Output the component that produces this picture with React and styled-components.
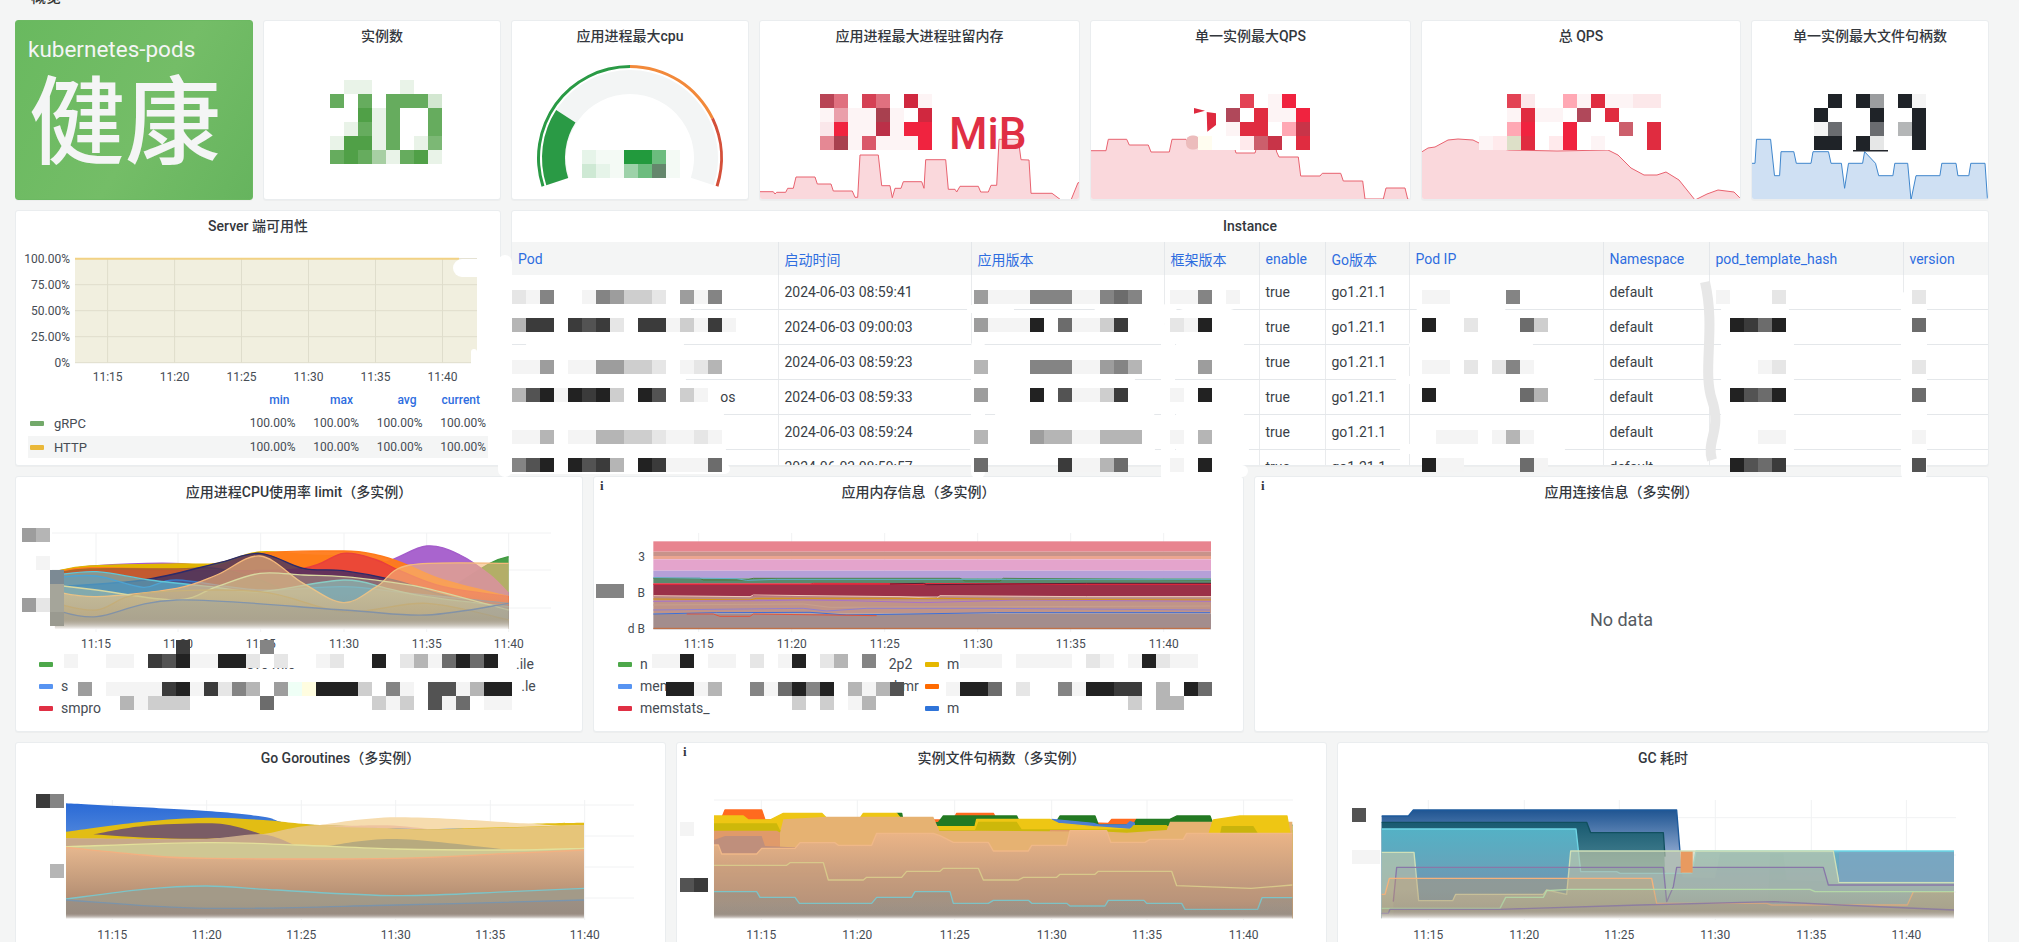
import React from 'react';
import styled, { createGlobalStyle } from 'styled-components';

const GlobalStyle = createGlobalStyle`
  html, body { margin: 0; padding: 0; height: 100%; overflow: hidden; background: #f4f5f5; }
  body { font-family: Roboto, "Noto Sans CJK SC", sans-serif; color: #3a3f47; }
`;

/* ---------- page + panels ---------- */

const Page = styled.div`
  position: relative;
  width: 2019px;
  height: 942px;
  overflow: hidden;
  box-sizing: border-box;
  padding: 0 30px 0 15px;
  background: #f4f5f5;
`;

const SectionTitle = styled.div`
  height: 20px;
  padding-left: 16px;
  font-size: 15px;
  font-weight: 500;
  line-height: 0;
  margin-top: -3px;
  margin-bottom: 3px;
  color: #333;
`;

const Row = styled.div`
  display: grid;
  grid-template-columns: ${p => p.$cols};
  height: ${p => p.$h}px;
  column-gap: 10px;
  margin-bottom: 10px;
`;

const Panel = styled.section`
  position: relative;
  display: flex;
  flex-direction: column;
  min-width: 0;
  box-sizing: border-box;
  background: #fff;
  border: 1px solid #eaedef;
  border-radius: 3px;
  box-shadow: 0 1px 1px rgba(0, 0, 0, 0.03);
  overflow: hidden;
`;

const PanelTitle = styled.h2`
  flex: none;
  margin: 0;
  height: 31px;
  font-size: 14px;
  line-height: 31px;
  font-weight: 500;
  text-align: center;
  color: #33373d;
`;

const InfoMark = styled.span`
  position: absolute;
  left: 6px;
  top: 1px;
  font: bold 13px "Liberation Serif", serif;
  color: #33373d;
`;

const StatusPanel = styled(Panel)`
  padding: 15px 0 0 12px;
  border-color: #6cb962;
  background: linear-gradient(120deg, #69b95f 0%, #74bd67 55%, #66b45e 100%);
  color: #f4f5f5;
`;

const StatusName = styled.div`
  font-size: 22.5px;
  line-height: 26px;
`;

const StatusValue = styled.div`
  font-size: 96px;
  font-weight: 500;
  line-height: 100px;
  margin-top: 11px;
  margin-left: 1px;
  white-space: nowrap;
`;

const StatBody = styled.div`
  flex: 1;
  display: flex;
  align-items: flex-end;
  min-height: 0;
`;

const StatUnit = styled.span`
  position: absolute;
  left: 189px;
  top: 87px;
  font-size: 44px;
  line-height: 52px;
  font-weight: 500;
  color: #e02f44;
`;

const NoData = styled.div`
  flex: 1;
  display: flex;
  align-items: center;
  justify-content: center;
  font-size: 18px;
  color: #555a61;
`;

/* ---------- chart parts ---------- */

const ChartSvg = styled.svg`
  display: block;
  flex: none;
`;

const AxisLabel = styled.text`
  font-family: Roboto, sans-serif;
  font-size: 12px;
  fill: #464c54;
  text-anchor: ${p => p.$anchor || 'middle'};
`;

const Legend = styled.div`
  display: grid;
  grid-template-columns: ${p => p.$cols || '1fr'};
  grid-auto-rows: 22px;
  padding-left: ${p => p.$left}px;
  font-size: 14px;
  color: #464c54;
`;

const LegendItem = styled.div`
  display: flex;
  align-items: center;
  white-space: nowrap;
  min-width: 0;
`;

const Marker = styled.i`
  flex: none;
  width: 14px;
  height: 5px;
  border-radius: 1px;
  margin-right: ${p => p.$gap || 8}px;
  background: ${p => p.$color};
`;

const LegendBit = styled.span`
  margin-left: ${p => p.$ml || 0}px;
`;

const ValueLegend = styled.div`
  flex: 1;
  display: grid;
  grid-template-columns: 1fr repeat(4, 63.5px);
  grid-template-rows: 20px 26px 22px;
  padding: 0 12px;
  font-size: 12px;
  color: #464c54;
`;

const ValueHead = styled.div`
  grid-column: ${p => p.$col};
  display: flex;
  align-items: center;
  justify-content: flex-end;
  padding-right: 8px;
  font-weight: 500;
  color: #2e6de0;
`;

const ValueRow = styled.div`
  grid-column: 1 / -1;
  display: grid;
  grid-template-columns: subgrid;
  align-items: center;
  background: ${p => (p.$shade ? '#f4f5f5' : 'transparent')};
`;

const ValueName = styled.div`
  display: flex;
  align-items: center;
  padding-left: 2px;
  font-size: 13px;
`;

const ValueCell = styled.div`
  text-align: right;
  padding-right: 2px;
`;

/* ---------- table ---------- */

const Table = styled.table`
  width: 1476px;
  table-layout: fixed;
  border-collapse: collapse;
  font-size: 14px;
  color: #3a3f47;
`;

const Th = styled.th`
  height: 33px;
  padding: 0 6px;
  text-align: left;
  font-weight: 400;
  color: #2e6de0;
  background: #f4f5f5;
  border-right: 1px solid #e4e7ea;
  white-space: nowrap;
  &:last-child { border-right: 0; }
`;

const Td = styled.td`
  height: 34px;
  padding: 0 ${p => p.$right || 6}px 0 6px;
  border-right: 1px solid #e9ebed;
  border-bottom: 1px solid #e4e7ea;
  white-space: nowrap;
  text-align: ${p => p.$align || 'left'};
  &:last-child { border-right: 0; }
`;

/* ---------- redaction overlay ---------- */

const PaintLayer = styled.svg`
  position: absolute;
  left: 0;
  top: 0;
  pointer-events: none;
`;

const MosaicGrid = styled.div`
  position: absolute;
  left: ${p => p.$x}px;
  top: ${p => 9.5 + 14 * p.$j}px;
  display: grid;
  grid-template-columns: repeat(${p => p.$cols}, 14px);
  grid-auto-rows: 14px;
  pointer-events: none;
`;

function hex(c) {
  return [1, 3, 5].map(i => parseInt(c.slice(i, i + 2), 16));
}

function tileColor(ch, base, tones) {
  if (ch === '.') return 'transparent';
  if (tones && tones[ch]) return tones[ch];
  const t = ch === ',' ? 0.05 : Number(ch) / 9;
  const [r, g, b] = hex(base);
  return `rgb(${[r, g, b].map(v => Math.round(255 + (v - 255) * t)).join(',')})`;
}

function Mosaic({ x, j, rows, base = '#222222', tones }) {
  return (
    <MosaicGrid $x={x} $j={j} $cols={rows[0].length}>
      {rows.join('').split('').map((ch, i) => (
        <div key={i} style={{ background: tileColor(ch, base, tones) }} />
      ))}
    </MosaicGrid>
  );
}

const RED = '#e02c40';
const RED_TONES = {
  a: '#b0485a', b: '#f0233f', c: '#c83448', p: '#ffa8b4', q: '#ffeaec', r: '#cc5f6c', t: '#dde0c8', y: '#fffdf0',
};

const MOSAICS = [
  { x: 330, j: 5, base: '#3a9430', rows: ['01100100', '70707772', '00817007', '01717007', '18817016', '78741781'] },
  { x: 582, j: 10, base: '#229a3d', tones: { g: '#64876c' }, rows: ['1,,996,', '21,46g,'] },
  { x: 820, j: 6, base: '#d0283f', tones: { a: '#a8404f', b: '#f0233f', c: '#bb3048', d: '#b84455' }, rows: ['d608609,', ',4,,a,09', '1b,,c,bb', '5a,7,,,b'] },
  { x: 1198, j: 6, base: RED, tones: RED_TONES, rows: ['...80,b0', '..a09,,b', '..,990pc', 'y00qrc09'] },
  { x: 1479, j: 6, base: RED, tones: RED_TONES, rows: ['..8100p,9,,11', '..,9,,0a09000', '..pb00b000r09', ',qt90qb0,0009'] },
  { x: 1814, j: 6, base: '#1f2328', rows: ['.9.94.9,', '9...9..9', ',6..6.39', '99091009'] },

  // table: pod
  { x: 512, j: 20, rows: ['1,5..,54221.4,5.'] },
  { x: 512, j: 22, rows: ['388.8781.88,2,8,'] },
  { x: 512, j: 25, rows: [',,4.,,44221.,13.'] },
  { x: 512, j: 27, rows: ['379,9892.97.2,..'] },
  { x: 512, j: 30, rows: [',,3.,,33221,,1,.'] },
  { x: 512, j: 32, rows: ['579.9783.98,,,6.'] },
  // table: app version
  { x: 974, j: 20, rows: ['4,,,555,,565.'] },
  { x: 974, j: 22, rows: ['4,,,9.6,,28..'] },
  { x: 974, j: 25, rows: ['3...555,,453.'] },
  { x: 974, j: 27, rows: ['4...9.7,,28..'] },
  { x: 974, j: 30, rows: ['3...433,,333.'] },
  { x: 974, j: 32, rows: ['6.....8,,36..'] },
  // table: framework
  { x: 1170, j: 20, rows: [',,5.,'] },
  { x: 1170, j: 22, rows: ['1,9..'] },
  { x: 1170, j: 25, rows: ['..4..'] },
  { x: 1170, j: 27, rows: [',.9..'] },
  { x: 1170, j: 30, rows: [',.3..'] },
  { x: 1170, j: 32, rows: [',.9..'] },
  // table: pod ip
  { x: 1422, j: 20, rows: [',,....5..'] },
  { x: 1422, j: 22, rows: ['9..1...62'] },
  { x: 1422, j: 25, rows: [',,.1.15,.'] },
  { x: 1422, j: 27, rows: ['9......63'] },
  { x: 1422, j: 30, rows: ['.,,,.,3,.'] },
  { x: 1422, j: 32, rows: ['9,,....6,'] },
  // table: hash
  { x: 1716, j: 20, rows: [',...1'] },
  { x: 1716, j: 22, rows: ['.9869'] },
  { x: 1716, j: 25, rows: ['...,1'] },
  { x: 1716, j: 27, rows: ['.9769'] },
  { x: 1716, j: 30, rows: ['...,,'] },
  { x: 1716, j: 32, rows: ['.9768'] },
  // table: version
  { x: 1912, j: 20, rows: ['1'] },
  { x: 1912, j: 22, rows: ['6'] },
  { x: 1912, j: 25, rows: ['1'] },
  { x: 1912, j: 27, rows: ['6'] },
  { x: 1912, j: 30, rows: [','] },
  { x: 1912, j: 32, rows: ['7'] },

  // cpu panel
  { x: 22, j: 37, rows: ['43'] },
  { x: 36, j: 39, rows: [','] },
  { x: 50, j: 40, tones: { a: '#7c8a94', b: '#a5a59a', c: '#9a9a90' }, rows: ['a', 'b', 'b', 'c'] },
  { x: 22, j: 42, rows: ['41'] },
  { x: 176, j: 45, rows: ['8'] },
  { x: 260, j: 45, rows: ['5'] },
  { x: 64, j: 46, rows: [',..,,.879,,9910100,1..9.13,6969.'] },
  { x: 64, j: 48, tones: { a: '#effff6', b: '#fffde0' }, rows: ['.4.,,,,89,8153.4ab9992.5,.77,399', '....3,222.....6.......2,2.7,6.,,'] },

  // memory panel
  { x: 596, j: 41, rows: ['55'] },
  { x: 652, j: 46, rows: [',,9.,,.1.,9.13.5'] },
  { x: 960, j: 46, rows: [',,,.,,,,.1,.,91,,'] },
  { x: 666, j: 48, rows: ['99,3..5,6959.3,37'] },
  { x: 946, j: 48, rows: [',996.1..5,9988.3.96'] },
  { x: 792, j: 49, rows: ['2.2.,3'] },
  { x: 1128, j: 49, rows: ['2.33'] },

  // bottom row axes
  { x: 36, j: 56, rows: ['85'] },
  { x: 50, j: 61, rows: ['3'] },
  { x: 680, j: 58, rows: [','] },
  { x: 680, j: 62, rows: ['78'] },
  { x: 1352, j: 57, rows: ['7'] },
  { x: 1352, j: 60, rows: [',,'] },
];

/* white brush marks that sit under the mosaics */
const BRUSH = [
  ['M505 262V470', 14],
  ['M462 268H484', 18],
  ['M474 352V368', 6],
  ['M511 309H685', 12],
  ['M532 344H678', 12],
  ['M511 379H680', 12],
  ['M511 414H718', 12],
  ['M511 449H720', 12],
  ['M511 469H725', 10],
  ['M978 346V472', 14],
  ['M971 309H1010', 8],
  ['M1100 305L1170 312', 14],
  ['M1170 320L1240 300', 14],
  ['M1168 330V476', 14],
  ['M980 379H1130', 10],
  ['M1000 414L1150 412', 10],
  ['M975 449H1150', 10],
  ['M1180 344H1240', 8],
  ['M1180 414H1240', 8],
  ['M1180 449H1245', 8],
  ['M1175 471H1242', 12],
  ['M1422 305H1500', 14],
  ['M1400 380H1590', 8],
  ['M1405 449H1560', 10],
  ['M1412 345H1530', 6],
  ['M1725 309H1785', 8],
  ['M1725 344H1790', 8],
  ['M1725 379H1790', 8],
  ['M1725 414H1790', 8],
  ['M1725 449H1790', 8],
  ['M1914 300V472', 26],
  ['M20 515V620', 4],
];

function Paint() {
  return (
    <PaintLayer width="2019" height="942" viewBox="0 0 2019 942">
      {BRUSH.map(([d, w]) => (
        <path key={d} d={d} stroke="#fff" strokeWidth={w} strokeLinecap="round" fill="none" />
      ))}
      <path d="M1705 282C1716 330 1702 370 1712 400S1706 440 1712 460" stroke="#e7e7e7" strokeWidth="10" fill="none" />
      <rect x="1186" y="135.5" width="14" height="14" rx="6" fill="#ecbcbc" />
      <polygon points="1194,108 1205,110.7 1194,113.7" fill="#de2a3f" />
      <polygon points="1206.7,112 1216,113.3 1216,125 1207.3,131.7" fill="#de2a3f" />
      <rect x="1853" y="149.5" width="35" height="2" fill="#23262c" />
    </PaintLayer>
  );
}

/* ---------- path helpers ---------- */

function smoothLine(pts) {
  let d = `M${pts[0][0]} ${pts[0][1]}`;
  for (let i = 0; i < pts.length - 1; i++) {
    const p0 = pts[i - 1] || pts[i];
    const p1 = pts[i];
    const p2 = pts[i + 1];
    const p3 = pts[i + 2] || p2;
    const c1 = [p1[0] + (p2[0] - p0[0]) / 6, p1[1] + (p2[1] - p0[1]) / 6];
    const c2 = [p2[0] - (p3[0] - p1[0]) / 6, p2[1] - (p3[1] - p1[1]) / 6];
    d += `C${c1[0]} ${c1[1]} ${c2[0]} ${c2[1]} ${p2[0]} ${p2[1]}`;
  }
  return d;
}

function straightLine(pts) {
  return 'M' + pts.map(p => p.join(' ')).join('L');
}

function Series({ pts, color, fill, alpha = 1, bottom, width = 4, curve, linePts }) {
  const trace = curve ? smoothLine : straightLine;
  const line = trace(pts);
  const first = pts[0][0];
  const last = pts[pts.length - 1][0];
  return (
    <>
      <path d={`${line}L${last} ${bottom}L${first} ${bottom}Z`} fill={fill || color} fillOpacity={alpha} />
      {color && <path d={linePts ? trace(linePts) : line} fill="none" stroke={color} strokeWidth={width} strokeLinejoin="round" />}
    </>
  );
}

function XTicks({ ticks, y }) {
  const labels = ['11:15', '11:20', '11:25', '11:30', '11:35', '11:40'];
  return ticks.map((x, i) => (
    <AxisLabel key={x} x={x} y={y}>{labels[i]}</AxisLabel>
  ));
}

function Grid({ xs, ys, x0, x1, y0, y1 }) {
  return (
    <g stroke="#f1f2f3" strokeWidth="1">
      {xs.map(x => <line key={x} x1={x} x2={x} y1={y0} y2={y1} />)}
      {ys.map(y => <line key={y} x1={x0} x2={x1} y1={y} y2={y} />)}
    </g>
  );
}

function Fade({ id, x, y, w, h }) {
  return (
    <>
      <defs>
        <linearGradient id={id} x1="0" y1="0" x2="0" y2="1">
          <stop offset="0" stopColor="#8f8078" stopOpacity="0" />
          <stop offset="0.7" stopColor="#8f8078" stopOpacity="0.22" />
          <stop offset="1" stopColor="#fff" stopOpacity="1" />
        </linearGradient>
      </defs>
      <rect x={x} y={y} width={w} height={h} fill={`url(#${id})`} />
    </>
  );
}

function Spark({ x, w, top, pts, stroke, fill }) {
  return (
    <ChartSvg width={w} height={200 - top} viewBox={`${x + 1} ${top - 1} ${w} ${200 - top}`}>
      <path d={`${straightLine(pts)}L${pts[pts.length - 1][0]} 200L${pts[0][0]} 200Z`} fill={fill} />
      <path d={straightLine(pts)} fill="none" stroke={stroke} strokeWidth="1" />
    </ChartSvg>
  );
}

/* ---------- row 1 data ---------- */

const MEM_SPARK = [
  [759, 191.7], [773.3, 191.7], [775, 194], [776.7, 192.3], [785.7, 192.3], [787.7, 188.3], [793.3, 188.3], [796, 177],
  [815, 177], [817.3, 184], [831, 184], [833.3, 191], [852.3, 191], [855, 197.3], [857.7, 197.3], [860, 155], [878.3, 155],
  [881.7, 185.7], [890, 185.7], [892.3, 197.7], [895, 188.3], [901, 188.3], [903.3, 181.7], [921.7, 181.7], [924, 188.3],
  [925.7, 159.7], [945.7, 159.7], [948.3, 189.3], [955, 189.3], [956.7, 192], [960, 186.3], [978.3, 186.3], [980.7, 192],
  [988.3, 192], [991, 185.3], [996.7, 185.3], [999, 139.3], [1018.3, 139.3], [1021, 159.7], [1029, 160], [1031, 193.3],
  [1052, 193.3], [1061, 200], [1071, 200], [1078, 182.7], [1080, 182.7],
];

const QPS_SPARK = [
  [1090, 150.7], [1106, 150.7], [1108.3, 139.3], [1126.7, 139.3], [1129.3, 145], [1148.3, 145], [1151, 152], [1169.3, 152],
  [1172, 139.3], [1186, 139.3], [1190, 145], [1209, 145], [1213, 139.3], [1232, 139.3], [1236, 153], [1255, 153], [1259, 139.3],
  [1274, 139.3], [1276.7, 152], [1279, 157], [1298.3, 157], [1300.7, 176], [1320, 176], [1322.3, 173.3], [1340.7, 173.3],
  [1343.3, 181], [1362.7, 181], [1365, 199], [1383.3, 199], [1386, 188], [1405, 188], [1407.7, 199], [1411, 200],
];

const TOTAL_SPARK = [
  [1420, 153], [1428, 148], [1435, 147], [1448, 140], [1458, 139], [1473, 140], [1483, 145], [1495, 148], [1509, 150], [1557, 151],
  [1608, 150], [1618, 155], [1631, 168], [1644, 175], [1657, 175], [1666, 172], [1679, 180], [1695, 200], [1707, 194], [1718, 190],
  [1734, 192], [1741, 199],
];

const FD_SPARK = [
  [1750.7, 163.3], [1755, 163.3], [1756.5, 139.3], [1770.6, 139.3], [1774.5, 175.7], [1779.6, 175.7], [1781, 151.7], [1793.8, 151.7],
  [1796.3, 163.3], [1811, 163.3], [1813, 151.7], [1828.5, 151.7], [1831, 163.3], [1841.4, 163.3], [1844.6, 188.3], [1848.5, 163.3],
  [1862.6, 163.3], [1864.6, 151.7], [1875.5, 163.3], [1878.7, 175.7], [1892.9, 175.7], [1894.8, 163.3], [1907.7, 163.3], [1911, 200],
  [1916, 175.7], [1939.9, 175.7], [1941.8, 163.3], [1956, 163.3], [1957.9, 175.7], [1968.8, 175.7], [1970.8, 163.3], [1985, 163.3], [1987.5, 200],
];

function polar(r, a) {
  const t = (a * Math.PI) / 180;
  return [630 - r * Math.cos(t), 158 - r * Math.sin(t)];
}

function band(r0, r1, a0, a1) {
  const large = a1 - a0 > 180 ? 1 : 0;
  const [ax, ay] = polar(r1, a0);
  const [bx, by] = polar(r1, a1);
  const [cx, cy] = polar(r0, a1);
  const [dx, dy] = polar(r0, a0);
  return `M${ax} ${ay}A${r1} ${r1} 0 ${large} 1 ${bx} ${by}L${cx} ${cy}A${r0} ${r0} 0 ${large} 0 ${dx} ${dy}Z`;
}

function Gauge() {
  return (
    <ChartSvg width="236" height="148" viewBox="512 51 236 148">
      <path d={band(64, 88, -18, 198)} fill="#f3f5f5" />
      <path d={band(65, 88, -18, 33)} fill="#2a9a45" />
      <path d={band(90, 93, -18, 90)} fill="#2a9a45" />
      <path d={band(90, 93, 90, 154.4)} fill="#f2893a" />
      <path d={band(90, 93, 154.4, 198)} fill="#d4503a" />
    </ChartSvg>
  );
}

/* ---------- row 3 + 4 series, in 3x reference units ---------- */

const CPU_SERIES = [
  { color: '#3f9a3f', alpha: 0.95, pts: [[1150, 385], [1300, 280], [1440, 190], [1496, 170]] },
  { color: '#a45ccb', alpha: 0.95, pts: [[135, 215], [250, 198], [490, 190], [620, 205], [750, 230], [1000, 210], [1130, 185], [1250, 138], [1350, 165], [1440, 225], [1496, 280]] },
  { color: '#e0b400', alpha: 1, pts: [[135, 215], [240, 198], [500, 192], [620, 190], [750, 156], [900, 165], [1100, 178], [1250, 240], [1496, 290]] },
  { color: '#ff7a1a', alpha: 0.95, pts: [[135, 217], [240, 203], [500, 207], [620, 198], [750, 160], [1000, 153], [1100, 165], [1180, 190], [1300, 240], [1496, 290]] },
  { color: '#e83e3d', alpha: 0.85, pts: [[135, 218], [300, 208], [600, 212], [880, 205], [1000, 160], [1100, 180], [1170, 212], [1300, 260], [1496, 290]] },
  { color: '#a8682c', alpha: 0.6, pts: [[135, 220], [240, 207], [500, 207], [620, 205], [750, 240], [880, 300]] },
  { color: '#2b2a6b', alpha: 0.7, pts: [[135, 260], [400, 240], [620, 190], [750, 160], [880, 205], [1000, 212], [1150, 240], [1300, 285], [1496, 330]] },
  { color: '#3a78c8', alpha: 0.45, pts: [[135, 232], [260, 228], [400, 262], [500, 240], [750, 270], [1000, 260], [1200, 280], [1496, 310]] },
  { color: '#5fc7d8', alpha: 0.55, pts: [[135, 225], [260, 215], [420, 240], [620, 262], [750, 275], [1000, 240], [1130, 265], [1250, 290], [1496, 320]] },
  { color: '#f5b87a', alpha: 0.62, pts: [[135, 275], [260, 290], [500, 265], [620, 225], [750, 168], [880, 250], [1000, 308], [1100, 260], [1200, 195], [1496, 190]] },
  { color: '#d8d8a0', alpha: 0.35, pts: [[135, 255], [260, 270], [500, 300], [620, 260], [750, 220], [880, 225], [1000, 230], [1130, 245], [1250, 265], [1496, 330]] },
  { color: '#c9b27a', alpha: 0.35, pts: [[135, 310], [260, 330], [400, 280], [750, 275], [1000, 335], [1250, 310], [1496, 360]] },
  { color: '#8096b0', alpha: 0.25, pts: [[135, 330], [260, 350], [500, 300], [1000, 330], [1250, 345], [1496, 310]] },
];

const MEM_BANDS = [
  [124, 31, '#e8848f'], [155, 13, '#c8938a'], [168, 10, '#eba590'], [178, 34, '#e4a4cc'], [212, 23, '#b5a0d8'],
  [235, 15, '#5a8a6e'], [250, 5, '#d8283c'], [255, 35, '#9a3048'], [290, 10, '#b88a80'], [300, 40, '#c09488'], [340, 48, '#a38d8d'],
];

const MEM_LINES = [
  ['#4a7a3c', [[190, 235], [330, 235], [340, 240], [470, 240], [490, 235], [1110, 235], [1125, 243], [1230, 243], [1240, 235], [1863, 240]]],
  ['#62b2c8', [[190, 233], [440, 236], [470, 241], [560, 238], [1110, 238], [1125, 238], [1220, 238], [1863, 238]]],
  ['#e0283c', [[190, 253], [660, 253], [670, 250], [1863, 252]]],
  ['#5a1c34', [[900, 252], [1000, 250], [1010, 254], [1490, 250], [1863, 250]]],
  ['#efc9b8', [[190, 287], [480, 290], [490, 285], [930, 290], [1040, 295], [1050, 287], [1490, 290], [1863, 290]]],
  ['#d9940f', [[190, 297], [480, 300], [500, 295], [1060, 295], [1280, 298], [1863, 300]]],
  ['#a872c8', [[190, 304], [520, 302], [640, 300], [780, 302], [1000, 308], [1280, 300], [1863, 304]]],
  ['#c7a08e', [[190, 315], [640, 312], [720, 322], [1860, 318]]],
  ['#8f80d0', [[190, 330], [640, 325], [710, 333], [830, 325], [1200, 325], [1860, 330]]],
  ['#3c6ed8', [[190, 342], [380, 338], [660, 337], [770, 345], [1220, 338], [1860, 338]]],
  ['#e0553c', [[290, 342], [370, 342], [390, 349], [480, 349], [490, 342], [860, 347]]],
  ['#c76c3a', [[190, 385], [1860, 385]]],
];

const FILE_LAYERS = [
  { fill: '#ff6a1f', color: '#ff6a1f', pts: [[102, 150], [125, 145], [135, 120], [245, 120], [255, 150], [820, 150], [830, 130], [940, 130], [950, 150], [1285, 160], [1295, 148], [1370, 148]] },
  { fill: '#237a23', color: '#237a23', pts: [[650, 130], [665, 130], [670, 158], [775, 158], [790, 138], [1010, 138], [1025, 170], [1120, 170], [1140, 138], [1245, 138], [1255, 165], [1360, 165], [1370, 148], [1470, 148], [1490, 138], [1590, 138], [1600, 165], [1837, 165]] },
  { fill: '#4f7fd0', color: '#4f7fd0', pts: [[1115, 148], [1240, 160], [1255, 165], [1340, 165], [1350, 155], [1365, 160]] },
  { fill: '#eec614', color: '#eec614', pts: [[102, 138], [190, 138], [205, 150], [270, 150], [310, 130], [425, 130], [440, 145], [540, 145], [550, 130], [650, 130], [665, 150], [770, 170], [885, 170], [890, 148], [1110, 148], [1135, 160], [1240, 170], [1350, 178], [1365, 170], [1470, 170], [1837, 170]] },
  { fill: '#cdb80a', pts: [[102, 160], [290, 160], [300, 180], [885, 180], [895, 155], [1010, 155], [1025, 178], [1350, 178], [1360, 165], [1460, 165], [1470, 180], [1837, 180]] },
  { fill: '#e09a6a', pts: [[102, 182], [290, 182], [305, 190], [410, 190], [420, 182], [640, 182], [650, 205], [810, 205], [820, 210], [870, 205], [985, 205], [1000, 225], [1100, 225], [1110, 180], [1165, 180], [1280, 208], [1330, 208], [1340, 190], [1560, 190], [1837, 190]] },
  { fill: '#e6b272', pts: [[300, 188], [310, 148], [440, 140], [760, 140], [778, 182], [890, 182], [1285, 185], [1340, 188], [1460, 180], [1470, 155], [1837, 155]] },
  { fill: '#eec614', color: '#eec614', pts: [[1587, 192], [1600, 150], [1680, 138], [1821, 138], [1830, 192]] },
  { fill: '#c9b40c', pts: [[1620, 192], [1625, 168], [1720, 168], [1735, 192]] },
  { fill: '#bf8f7c', pts: [[102, 210], [135, 198], [245, 198], [255, 228], [1837, 300]] },
];

const GC_LAYERS = [
  {
    gradient: 'gcNavy', color: '#1c5a9c',
    pts: [[125, 138], [205, 138], [220, 120], [1010, 120], [1020, 245], [1028, 322], [1125, 325], [1140, 250], [1842, 250]],
    linePts: [[125, 138], [205, 138], [220, 120], [1010, 120], [1020, 245]],
  },
  {
    gradient: 'gcTeal', color: '#10505f',
    pts: [[125, 157], [740, 157], [752, 188], [970, 188], [975, 300], [985, 395], [1285, 395], [1290, 250], [1330, 250], [1340, 330], [1842, 345]],
    linePts: [[125, 157], [740, 157], [752, 188], [970, 188], [975, 260]],
  },
  { gradient: 'gcCyan', color: '#6fd6e6', alpha: 0.92, pts: [[125, 177], [708, 177], [722, 305], [830, 305], [840, 310], [1055, 310], [1068, 243], [1842, 243]] },
  { fill: '#c8ccaa', color: '#cfe0b8', alpha: 0.62, pts: [[125, 247], [222, 247], [236, 392], [338, 392], [347, 373], [610, 373], [620, 360], [680, 373], [692, 243], [1480, 243], [1497, 337], [1842, 337]] },
  { fill: '#7a6a9a', color: '#8878a8', alpha: 0.1, pts: [[160, 395], [170, 292], [970, 292], [980, 395], [1000, 350], [1010, 292], [1450, 292], [1465, 345], [1842, 345]] },
  { fill: '#d8a060', color: '#f5b27c', alpha: 0.32, pts: [[125, 373], [135, 373], [148, 325], [935, 325], [950, 400], [1280, 400], [1295, 405], [1702, 405], [1720, 365], [1842, 365]] },
  { fill: '#a8b090', color: '#b5d9a8', alpha: 0.22, pts: [[125, 415], [480, 415], [497, 382], [610, 382], [620, 362], [690, 358], [1410, 358], [1425, 365], [1842, 365]] },
  { fill: '#8a7a90', color: '#8d7da8', alpha: 0.1, pts: [[125, 430], [145, 430], [150, 418], [480, 418], [900, 405], [1300, 395], [1500, 405], [1842, 420]] },
];

function CpuChart() {
  return (
    <ChartSvg width="567" height="145" viewBox="16 508 567 145">
      <Grid xs={[96, 178, 260.7, 344, 426.7, 508.7]} ys={[533, 570, 608]} x0={52} x1={551} y0={533} y1={632} />
      <g transform="translate(10 500) scale(.33333)">
        {CPU_SERIES.map(s => (
          <Series key={s.color} curve bottom={385} pts={s.pts} color={s.color} alpha={s.alpha} />
        ))}
        <Fade id="cpuFade" x={135} y={280} w={1361} h={108} />
      </g>
      <XTicks ticks={[96, 178, 260.7, 344, 426.7, 508.7]} y={648} />
    </ChartSvg>
  );
}

function MemChart() {
  const ticks = [698.7, 791.7, 884.7, 977.7, 1070.7, 1163.7];
  return (
    <ChartSvg width="650" height="145" viewBox="594 508 650 145">
      <Grid xs={ticks} ys={[]} x0={653} x1={1211} y0={533} y1={632} />
      <g transform="translate(590 500) scale(.33333)">
        {MEM_BANDS.map(([y, h, c]) => <rect key={y} x={190} y={y} width={1673} height={h} fill={c} />)}
        {MEM_LINES.map(([c, pts]) => (
          <path key={c} d={straightLine(pts)} fill="none" stroke={c} strokeWidth="3" strokeLinejoin="round" />
        ))}
      </g>
      <AxisLabel $anchor="end" x={645} y={561}>3</AxisLabel>
      <AxisLabel $anchor="end" x={645} y={597}>B</AxisLabel>
      <AxisLabel $anchor="end" x={645} y={633}>d B</AxisLabel>
      <XTicks ticks={ticks} y={648} />
    </ChartSvg>
  );
}

function GoChart() {
  const ticks = [112.3, 206.7, 301.3, 395.7, 490.3, 584.7];
  return (
    <ChartSvg width="649" height="168" viewBox="16 774 649 168">
      <defs>
        <linearGradient id="goBlue" x1="0" y1="0" x2="0" y2="1">
          <stop offset="0" stopColor="#2a6ad6" />
          <stop offset="0.5" stopColor="#6b9be0" />
        </linearGradient>
        <linearGradient id="goTan" gradientUnits="userSpaceOnUse" x1="0" y1="240" x2="0" y2="400">
          <stop offset="0" stopColor="#e3b58d" />
          <stop offset="1" stopColor="#ae8a70" />
        </linearGradient>
      </defs>
      <Grid xs={ticks} ys={[805, 836, 867, 898]} x0={66} x1={634} y0={800} y1={920} />
      <g transform="translate(10 770) scale(.33333)">
        <Series curve bottom={445} fill="url(#goBlue)" pts={[[168, 100], [590, 123], [760, 140], [930, 165], [1722, 165]]} />
        <Series curve bottom={445} fill="#e2bd14" pts={[[168, 185], [400, 155], [590, 143], [760, 150], [930, 165], [1260, 178], [1540, 162], [1722, 158]]} />
        <path d={`${smoothLine([[250, 193], [400, 168], [590, 160], [680, 170], [755, 193]])}Q590 220 250 193Z`} fill="#7a5c65" />
        <path d={`${smoothLine([[930, 165], [1160, 142], [1540, 160], [1722, 175]])}L1722 165L1260 178Z`} fill="#f6dcae" />
        <Series curve bottom={445} fill="#e6c579" pts={[[168, 205], [400, 207], [590, 207], [755, 193], [930, 165], [1260, 178], [1722, 165]]} />
        <path d={`${smoothLine([[950, 170], [1130, 166], [1262, 178]])}Z`} fill="#eec3a0" />
        <Series curve bottom={445} fill="#c7a98a" pts={[[168, 205], [400, 207], [590, 207], [755, 193], [860, 228]]} />
        <Series curve bottom={445} fill="#b7aa7e" pts={[[950, 228], [1160, 207], [1500, 240]]} />
        <Series curve bottom={445} fill="#cfc793" color="#e3e09a" pts={[[168, 230], [590, 218], [860, 225], [1160, 237], [1500, 240], [1722, 235]]} />
        <Series curve bottom={445} fill="url(#goTan)" color="#f3b081" pts={[[168, 232], [400, 255], [590, 265], [1160, 265], [1500, 250], [1722, 240]]} />
        <Series curve bottom={445} fill="#a39a88" color="#7cc4c8" pts={[[168, 387], [400, 358], [590, 348], [800, 360], [1160, 377], [1500, 365], [1722, 355]]} />
        <Series curve bottom={445} fill="#9c9084" color="#7a95ad" pts={[[168, 390], [590, 415], [1160, 405], [1722, 390]]} />
        <Fade id="goFade" x={168} y={390} w={1554} h={57} />
      </g>
      <XTicks ticks={ticks} y={939} />
    </ChartSvg>
  );
}

function FileChart() {
  const ticks = [761.3, 857.3, 954.7, 1051.7, 1147, 1243.6];
  return (
    <ChartSvg width="649" height="168" viewBox="677 774 649 168">
      <defs>
        <linearGradient id="fileTan" gradientUnits="userSpaceOnUse" x1="0" y1="170" x2="0" y2="420">
          <stop offset="0" stopColor="#f0b888" />
          <stop offset="1" stopColor="#ad8c78" />
        </linearGradient>
        <linearGradient id="fileGray" gradientUnits="userSpaceOnUse" x1="0" y1="360" x2="0" y2="430">
          <stop offset="0" stopColor="#a8917e" />
          <stop offset="1" stopColor="#9f9488" />
        </linearGradient>
      </defs>
      <Grid xs={ticks} ys={[800, 882]} x0={714} x1={1293} y0={800} y1={920} />
      <g transform="translate(680 770) scale(.33333)">
        {FILE_LAYERS.map((s, i) => (
          <Series key={i} bottom={445} fill={s.fill} color={s.color} pts={s.pts} />
        ))}
        <Series
          bottom={445}
          fill="url(#fileTan)"
          color="#f0b888"
          pts={[[102, 225], [115, 225], [125, 252], [230, 252], [245, 235], [345, 235], [360, 218], [465, 218], [475, 226], [575, 226], [590, 190], [760, 190], [780, 197], [820, 217], [925, 217], [940, 243], [1045, 243], [1055, 226], [1160, 226], [1170, 182], [1280, 182], [1292, 217], [1395, 217], [1410, 208], [1510, 208], [1520, 190], [1837, 190]]}
        />
        <Series
          bottom={445}
          fill="#c49a7c"
          alpha={0.35}
          color="#d8c88a"
          pts={[[102, 286], [320, 286], [330, 278], [430, 278], [445, 330], [550, 330], [560, 322], [665, 322], [680, 304], [780, 304], [790, 295], [895, 295], [910, 330], [1015, 330], [1030, 322], [1130, 322], [1140, 313], [1245, 313], [1255, 304], [1475, 304], [1490, 347], [1713, 355], [1837, 345]]}
        />
        <Series
          bottom={445}
          fill="url(#fileGray)"
          color="#7cc4c8"
          pts={[[102, 365], [230, 365], [240, 382], [345, 382], [358, 400], [575, 400], [590, 382], [695, 382], [705, 365], [810, 365], [820, 400], [925, 400], [940, 391], [1045, 391], [1055, 400], [1160, 400], [1170, 408], [1275, 408], [1285, 391], [1392, 391], [1400, 400], [1505, 400], [1515, 418], [1733, 418], [1746, 383], [1837, 383]]}
        />
        <Fade id="fileFade" x={102} y={395} w={1735} h={52} />
      </g>
      <XTicks ticks={ticks} y={939} />
    </ChartSvg>
  );
}

function GcChart() {
  const ticks = [1428.3, 1524.3, 1619.3, 1715.3, 1811.3, 1906.4];
  return (
    <ChartSvg width="650" height="168" viewBox="1338 774 650 168">
      <defs>
        <linearGradient id="gcNavy" gradientUnits="userSpaceOnUse" x1="0" y1="120" x2="0" y2="250">
          <stop offset="0" stopColor="#1f5592" />
          <stop offset="1" stopColor="#8aa5cd" />
        </linearGradient>
        <linearGradient id="gcTeal" gradientUnits="userSpaceOnUse" x1="0" y1="157" x2="0" y2="300">
          <stop offset="0" stopColor="#185a70" />
          <stop offset="1" stopColor="#4e8796" />
        </linearGradient>
        <linearGradient id="gcCyan" gradientUnits="userSpaceOnUse" x1="0" y1="177" x2="0" y2="345">
          <stop offset="0" stopColor="#58b8cc" />
          <stop offset="1" stopColor="#6f9fb8" />
        </linearGradient>
      </defs>
      <Grid xs={ticks} ys={[817.7, 855, 892]} x0={1382} x1={1956} y0={800} y1={920} />
      <g transform="translate(1340 770) scale(.33333)">
        {GC_LAYERS.map((s, i) => (
          <Series
            key={i}
            bottom={445}
            fill={s.gradient ? `url(#${s.gradient})` : s.fill}
            color={s.color}
            alpha={s.alpha}
            pts={s.pts}
            linePts={s.linePts}
          />
        ))}
        <rect x="1022" y="245" width="36" height="63" fill="#e89a60" />
        <rect x="1497" y="246" width="345" height="90" fill="#7fa6c0" fillOpacity="0.75" />
        <Fade id="gcFade" x={125} y={360} w={1717} h={87} />
      </g>
      <XTicks ticks={ticks} y={939} />
    </ChartSvg>
  );
}

function ServerChart() {
  const xs = [107.6, 174.6, 241.5, 308.5, 375.5, 442.5];
  const ys = [258.7, 284.7, 310.7, 336.7, 362.7];
  const labels = ['100.00%', '75.00%', '50.00%', '25.00%', '0%'];
  return (
    <ChartSvg width="484" height="148" viewBox="16 242 484 148">
      <rect x="75" y="258.7" width="402" height="104" fill="#f1efdf" />
      <g stroke="#dfddcc" strokeWidth="1">
        {xs.map(x => <line key={x} x1={x} x2={x} y1={258.7} y2={362.7} />)}
        {ys.map(y => <line key={y} x1={75} x2={477} y1={y} y2={y} />)}
      </g>
      <line x1="75" x2="459" y1="258.7" y2="258.7" stroke="#f2d284" strokeWidth="2" />
      {ys.map((y, i) => (
        <AxisLabel key={y} $anchor="end" x={70} y={y + 4}>{labels[i]}</AxisLabel>
      ))}
      <XTicks ticks={xs} y={381} />
    </ChartSvg>
  );
}

/* ---------- table data ---------- */

const COLUMNS = [
  ['Pod', 266], ['启动时间', 193], ['应用版本', 193], ['框架版本', 95], ['enable', 66],
  ['Go版本', 84], ['Pod IP', 194], ['Namespace', 106], ['pod_template_hash', 194], ['version', 85],
];

const STARTED = ['08:59:41', '09:00:03', '08:59:23', '08:59:33', '08:59:24', '08:59:57'];

export default function App() {
  return (
    <Page>
      <GlobalStyle />
      <SectionTitle>概览</SectionTitle>

      <Row $h={180} $cols="238px 238px 238px 321px 321px 320px 238px">
        <StatusPanel>
          <StatusName>kubernetes-pods</StatusName>
          <StatusValue>健康</StatusValue>
        </StatusPanel>
        <Panel>
          <PanelTitle>实例数</PanelTitle>
        </Panel>
        <Panel>
          <PanelTitle>应用进程最大cpu</PanelTitle>
          <StatBody><Gauge /></StatBody>
        </Panel>
        <Panel>
          <PanelTitle>应用进程最大进程驻留内存</PanelTitle>
          <StatBody>
            <Spark x={759} w={319} top={100} pts={MEM_SPARK} stroke="#e8626f" fill="#fad8dc" />
          </StatBody>
          <StatUnit>MiB</StatUnit>
        </Panel>
        <Panel>
          <PanelTitle>单一实例最大QPS</PanelTitle>
          <StatBody>
            <Spark x={1090} w={319} top={100} pts={QPS_SPARK} stroke="#e8626f" fill="#fad8dc" />
          </StatBody>
        </Panel>
        <Panel>
          <PanelTitle>总 QPS</PanelTitle>
          <StatBody>
            <Spark x={1421} w={318} top={100} pts={TOTAL_SPARK} stroke="#e8626f" fill="#fad8dc" />
          </StatBody>
        </Panel>
        <Panel>
          <PanelTitle>单一实例最大文件句柄数</PanelTitle>
          <StatBody>
            <Spark x={1751} w={236} top={100} pts={FD_SPARK} stroke="#3f86cc" fill="#cfe0f3" />
          </StatBody>
        </Panel>
      </Row>

      <Row $h={256} $cols="486px 1478px">
        <Panel>
          <PanelTitle>Server 端可用性</PanelTitle>
          <ServerChart />
          <ValueLegend>
            <ValueHead $col={2}>min</ValueHead>
            <ValueHead $col={3}>max</ValueHead>
            <ValueHead $col={4}>avg</ValueHead>
            <ValueHead $col={5}>current</ValueHead>
            {[['gRPC', '#73a96a'], ['HTTP', '#eab839']].map(([name, color], i) => (
              <ValueRow key={name} $shade={i === 1}>
                <ValueName><Marker $color={color} $gap={10} />{name}</ValueName>
                <ValueCell>100.00%</ValueCell>
                <ValueCell>100.00%</ValueCell>
                <ValueCell>100.00%</ValueCell>
                <ValueCell>100.00%</ValueCell>
              </ValueRow>
            ))}
          </ValueLegend>
        </Panel>
        <Panel>
          <PanelTitle>Instance</PanelTitle>
          <Table>
            <colgroup>
              {COLUMNS.map(([name, w]) => <col key={name} width={w} />)}
            </colgroup>
            <thead>
              <tr>{COLUMNS.map(([name]) => <Th key={name}>{name}</Th>)}</tr>
            </thead>
            <tbody>
              {STARTED.map((time, i) => (
                <tr key={time}>
                  <Td $align="right" $right={42}>{i === 3 ? 'os' : ''}</Td>
                  <Td>2024-06-03 {time}</Td>
                  <Td />
                  <Td />
                  <Td>true</Td>
                  <Td>go1.21.1</Td>
                  <Td />
                  <Td>default</Td>
                  <Td />
                  <Td />
                </tr>
              ))}
            </tbody>
          </Table>
        </Panel>
      </Row>

      <Row $h={256} $cols="568px 651px 735px">
        <Panel>
          <PanelTitle>应用进程CPU使用率 limit（多实例）</PanelTitle>
          <CpuChart />
          <Legend $left={23}>
            <LegendItem><Marker $color="#4da84a" /><LegendBit $ml={182}>-svc-mic</LegendBit><LegendBit $ml={221}>.ile</LegendBit></LegendItem>
            <LegendItem><Marker $color="#5794f2" />s<LegendBit $ml={453}>.le</LegendBit></LegendItem>
            <LegendItem><Marker $color="#e02f44" />smpro</LegendItem>
          </Legend>
        </Panel>
        <Panel>
          <InfoMark>i</InfoMark>
          <PanelTitle>应用内存信息（多实例）</PanelTitle>
          <MemChart />
          <Legend $left={24} $cols="307px 1fr">
            <LegendItem><Marker $color="#4da84a" />n<LegendBit $ml={241}>2p2</LegendBit></LegendItem>
            <LegendItem><Marker $color="#e5b800" />m</LegendItem>
            <LegendItem><Marker $color="#5794f2" />mem<LegendBit $ml={222}>hmr</LegendBit></LegendItem>
            <LegendItem><Marker $color="#ff6a00" /></LegendItem>
            <LegendItem><Marker $color="#e02f44" />memstats_</LegendItem>
            <LegendItem><Marker $color="#2f74d9" />m</LegendItem>
          </Legend>
        </Panel>
        <Panel>
          <InfoMark>i</InfoMark>
          <PanelTitle>应用连接信息（多实例）</PanelTitle>
          <NoData>No data</NoData>
        </Panel>
      </Row>

      <Row $h={256} $cols="651px 651px 652px">
        <Panel>
          <PanelTitle>Go Goroutines（多实例）</PanelTitle>
          <GoChart />
        </Panel>
        <Panel>
          <InfoMark>i</InfoMark>
          <PanelTitle>实例文件句柄数（多实例）</PanelTitle>
          <FileChart />
        </Panel>
        <Panel>
          <PanelTitle>GC 耗时</PanelTitle>
          <GcChart />
        </Panel>
      </Row>

      <Paint />
      {MOSAICS.map((m, i) => <Mosaic key={i} {...m} />)}
    </Page>
  );
}
